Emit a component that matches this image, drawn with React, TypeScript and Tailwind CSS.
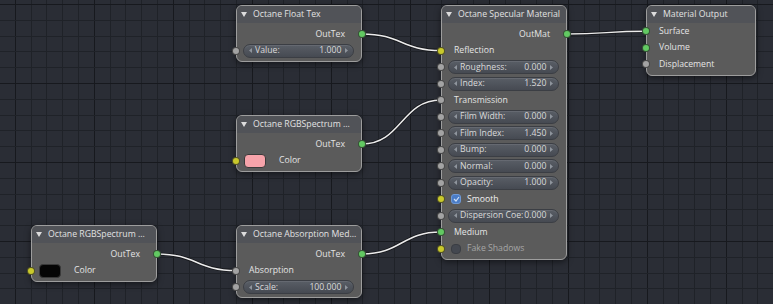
import React from 'react';

// ─── types ─────────────────────────────────────────────

type Sock = 'float' | 'color' | 'shader';

type RowDef =
    | { t: 'out'; label: string; s: Sock }
    | { t: 'in'; label: string; s: Sock }
    | { t: 'field'; label: string; value: string; s: Sock }
    | { t: 'swatch'; swatch: string; label: string; s: Sock }
    | { t: 'check'; label: string; on: boolean; s: Sock };

interface NodeDef {
    title: string;
    pos: string;
    rows: RowDef[];
    outputs: boolean;
}

const sockColor: Record<Sock, string> = {
    float: 'bg-[#a3a3a3]',
    color: 'bg-[#c9c92c]',
    shader: 'bg-[#62c962]',
};

// ─── data ──────────────────────────────────────────────

const NODES: NodeDef[] = [
    {
        title: 'Octane RGBSpectrum ...',
        pos: 'left-[31px] top-[225px] w-[126px]',
        outputs: true,
        rows: [
            { t: 'out', label: 'OutTex', s: 'shader' },
            { t: 'swatch', swatch: 'bg-[#050505]', label: 'Color', s: 'color' },
        ],
    },
    {
        title: 'Octane Float Tex',
        pos: 'left-[236px] top-[5px] w-[126px]',
        outputs: true,
        rows: [
            { t: 'out', label: 'OutTex', s: 'shader' },
            { t: 'field', label: 'Value:', value: '1.000', s: 'float' },
        ],
    },
    {
        title: 'Octane RGBSpectrum ...',
        pos: 'left-[236px] top-[115px] w-[126px]',
        outputs: true,
        rows: [
            { t: 'out', label: 'OutTex', s: 'shader' },
            { t: 'swatch', swatch: 'bg-[#f7a3aa]', label: 'Color', s: 'color' },
        ],
    },
    {
        title: 'Octane Absorption Med...',
        pos: 'left-[236px] top-[225px] w-[126px]',
        outputs: true,
        rows: [
            { t: 'out', label: 'OutTex', s: 'shader' },
            { t: 'in', label: 'Absorption', s: 'float' },
            { t: 'field', label: 'Scale:', value: '100.000', s: 'float' },
        ],
    },
    {
        title: 'Octane Specular Material',
        pos: 'left-[441px] top-[5px] w-[126px]',
        outputs: true,
        rows: [
            { t: 'out', label: 'OutMat', s: 'shader' },
            { t: 'in', label: 'Reflection', s: 'color' },
            { t: 'field', label: 'Roughness:', value: '0.000', s: 'float' },
            { t: 'field', label: 'Index:', value: '1.520', s: 'float' },
            { t: 'in', label: 'Transmission', s: 'float' },
            { t: 'field', label: 'Film Width:', value: '0.000', s: 'float' },
            { t: 'field', label: 'Film Index:', value: '1.450', s: 'float' },
            { t: 'field', label: 'Bump:', value: '0.000', s: 'float' },
            { t: 'field', label: 'Normal:', value: '0.000', s: 'float' },
            { t: 'field', label: 'Opacity:', value: '1.000', s: 'float' },
            { t: 'check', label: 'Smooth', on: true, s: 'color' },
            { t: 'field', label: 'Dispersion Coe:', value: '0.000', s: 'float' },
            { t: 'in', label: 'Medium', s: 'shader' },
            { t: 'check', label: 'Fake Shadows', on: false, s: 'color' },
        ],
    },
    {
        title: 'Material Output',
        pos: 'left-[646px] top-[5px] w-[110px]',
        outputs: false,
        rows: [
            { t: 'in', label: 'Surface', s: 'shader' },
            { t: 'in', label: 'Volume', s: 'shader' },
            { t: 'in', label: 'Displacement', s: 'float' },
        ],
    },
];

// from output socket to input socket
const WIRES: [number, number, number, number][] = [
    [362, 34, 441, 50.5],
    [362, 144, 441, 100],
    [362, 254, 441, 232],
    [157, 254, 236, 270.5],
    [567, 34, 646, 31.25],
];

// ─── pieces ────────────────────────────────────────────

function Socket({ type, side }: { type: Sock; side: 'in' | 'out' }) {
    return (
        <span
            className={`absolute top-1/2 -translate-y-1/2 w-[8px] h-[8px] rounded-full border border-[#222]/70 ${sockColor[type]} ${
                side === 'in' ? 'left-[-5px]' : 'right-[-5px]'
            }`}
        />
    );
}

function Arrow({ dir }: { dir: 'l' | 'r' }) {
    return (
        <svg width="3" height="5" viewBox="0 0 3 5" className="shrink-0">
            <path d={dir === 'l' ? 'M3 0L0 2.5L3 5Z' : 'M0 0L3 2.5L0 5Z'} fill="#8f959d" />
        </svg>
    );
}

function Row({ row }: { row: RowDef }) {
    const base = 'relative h-[16.5px] flex items-center';
    if (row.t === 'out') {
        return (
            <div className={`${base} justify-end pr-[16px] text-[#e4e4e4]`}>
                {row.label}
                <Socket type={row.s} side="out" />
            </div>
        );
    }
    if (row.t === 'in') {
        return (
            <div className={`${base} pl-[12px] text-[#e4e4e4]`}>
                {row.label}
                <Socket type={row.s} side="in" />
            </div>
        );
    }
    if (row.t === 'field') {
        return (
            <div className={`${base} pl-[6px] pr-[7.5px]`}>
                <div className="flex-1 h-[14px] flex items-center rounded-full bg-gradient-to-b from-[#595e66] to-[#464a52] border border-[#3b3e44] shadow-[inset_0_1px_0_rgba(255,255,255,0.08)] pl-[5px] pr-[5px] text-[#dadada]">
                    <Arrow dir="l" />
                    <span className="ml-[3px] flex-1 whitespace-nowrap">{row.label}</span>
                    <span className="mr-[3px] whitespace-nowrap">{row.value}</span>
                    <Arrow dir="r" />
                </div>
                <Socket type={row.s} side="in" />
            </div>
        );
    }
    if (row.t === 'swatch') {
        return (
            <div className={`${base} pl-[7px] text-[#e4e4e4]`}>
                <span className={`w-[22px] h-[14px] rounded-[4px] border border-[#3a3a3a] ${row.swatch}`} />
                <span className="ml-[13px]">{row.label}</span>
                <Socket type={row.s} side="in" />
            </div>
        );
    }
    return (
        <div className={`${base} pl-[9px]`}>
            {row.on ? (
                <span className="w-[10px] h-[10px] rounded-[3px] bg-[#4a7cc6] border border-[#6f9ad6] flex items-center justify-center">
                    <svg width="7" height="6" viewBox="0 0 7 6">
                        <path d="M1 3L3 5L6 1" stroke="#cfe0f6" strokeWidth="1.2" fill="none" />
                    </svg>
                </span>
            ) : (
                <span className="w-[10px] h-[10px] rounded-[4px] bg-[#444850] border border-[#3a3d43]" />
            )}
            <span className={`ml-[6px] ${row.on ? 'text-[#f0f0f0]' : 'text-[#a6a6a6]'}`}>{row.label}</span>
            <Socket type={row.s} side="in" />
        </div>
    );
}

function Node({ node }: { node: NodeDef }) {
    return (
        <div
            className={`absolute ${node.pos} rounded-[6px] border border-[#9d9d9d] bg-[#5b5b5b] shadow-[0_2px_6px_rgba(0,0,0,0.5)]`}
        >
            <div className="h-[17px] flex items-center rounded-t-[5px] bg-[#515358] pl-[4px] text-[#e2e2e2]">
                <svg width="6" height="5" viewBox="0 0 6 5" className="shrink-0">
                    <path d="M0 0H6L3 5Z" fill="#dcdcdc" />
                </svg>
                <span className="ml-[6px] whitespace-nowrap">{node.title}</span>
            </div>
            <div className={`${node.outputs ? 'pt-[2.75px]' : 'pt-0'} pb-[2px]`}>
                {node.rows.map((r, i) => (
                    <Row key={i} row={r} />
                ))}
            </div>
        </div>
    );
}

function Backdrop() {
    const vx: number[] = [];
    for (let k = 0; k * 15.8 < 773; k++) vx.push(k);
    const hy: number[] = [];
    for (let k = -1; 5 + k * 15.8 < 304; k++) hy.push(k);

    return (
        <svg className="absolute inset-0" width="773" height="304">
            {vx.map(k => (
                <line
                    key={'v' + k}
                    x1={Math.round(k * 15.8) - 0.5}
                    x2={Math.round(k * 15.8) - 0.5}
                    y1={0}
                    y2={304}
                    stroke={k % 5 === 1 ? '#17191e' : '#1f2228'}
                    strokeWidth={1}
                />
            ))}
            {hy.map(k => (
                <line
                    key={'h' + k}
                    y1={Math.round(5 + k * 15.8) - 0.5}
                    y2={Math.round(5 + k * 15.8) - 0.5}
                    x1={0}
                    x2={773}
                    stroke={((k % 5) + 5) % 5 === 0 ? '#17191e' : '#1f2228'}
                    strokeWidth={1}
                />
            ))}
            {WIRES.map(([x1, y1, x2, y2], i) => {
                const h = (x2 - x1) * 0.5;
                const d = `M${x1} ${y1}C${x1 + h} ${y1} ${x2 - h} ${y2} ${x2} ${y2}`;
                return (
                    <g key={i}>
                        <path d={d} stroke="rgba(0,0,0,0.45)" strokeWidth={3.2} fill="none" />
                        <path d={d} stroke="#ececec" strokeWidth={1.5} fill="none" />
                    </g>
                );
            })}
        </svg>
    );
}

// ─── main ──────────────────────────────────────────────

export default function App() {
    return (
        <div className="relative w-[773px] h-[304px] overflow-hidden bg-[#2a2d35] text-[8.7px] leading-[11px] font-['Open_Sans',sans-serif]">
            <Backdrop />
            {NODES.map((n, i) => (
                <Node key={i} node={n} />
            ))}
        </div>
    );
}
